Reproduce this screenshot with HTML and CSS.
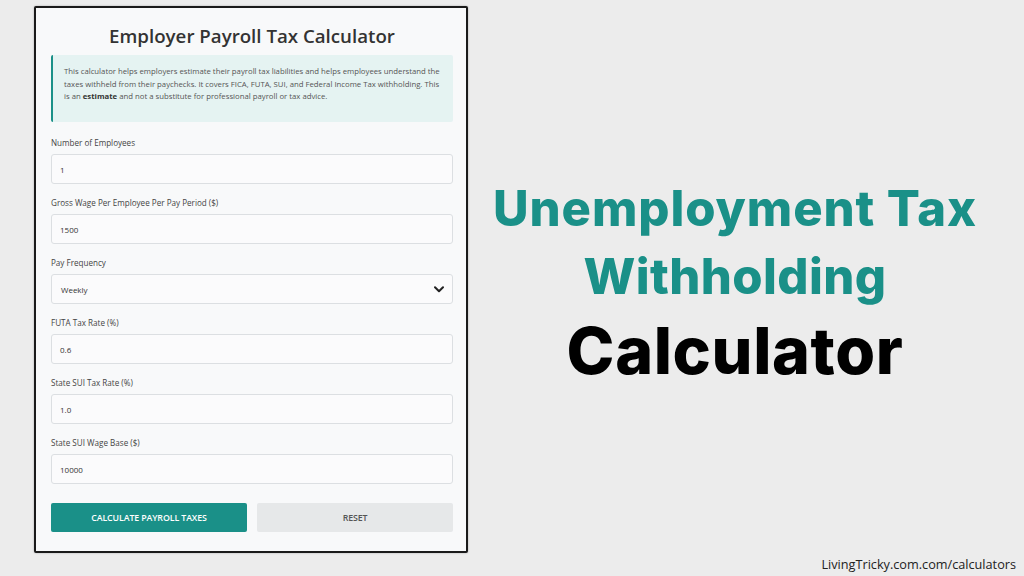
FILE: index.html
```html
<!DOCTYPE html>
<html>
<head>
<meta charset="utf-8">
<link rel="stylesheet" href="styles.css">
</head>
<body>
<div class="page">
  <div class="main">
    <div class="card">
      <h1 class="title">Employer Payroll Tax Calculator</h1>
      <div class="info">
        <p>This calculator helps employers estimate their payroll tax liabilities and helps employees understand the taxes withheld from their paychecks. It covers FICA, FUTA, SUI, and Federal Income Tax withholding. This is an <b>estimate</b> and not a substitute for professional payroll or tax advice.</p>
      </div>
      <div class="field">
        <label class="label">Number of Employees</label>
        <div class="input">1</div>
      </div>
      <div class="field">
        <label class="label">Gross Wage Per Employee Per Pay Period ($)</label>
        <div class="input">1500</div>
      </div>
      <div class="field">
        <label class="label">Pay Frequency</label>
        <div class="input select">
          <span>Weekly</span>
          <svg class="chev" width="10" height="7" viewBox="0 0 10 7"><path d="M1 1.2 L5 5.2 L9 1.2" fill="none" stroke="#222" stroke-width="2" stroke-linecap="round" stroke-linejoin="round"/></svg>
        </div>
      </div>
      <div class="field">
        <label class="label">FUTA Tax Rate (%)</label>
        <div class="input">0.6</div>
      </div>
      <div class="field">
        <label class="label">State SUI Tax Rate (%)</label>
        <div class="input">1.0</div>
      </div>
      <div class="field">
        <label class="label">State SUI Wage Base ($)</label>
        <div class="input">10000</div>
      </div>
      <div class="buttons">
        <div class="btn primary">CALCULATE PAYROLL TAXES</div>
        <div class="btn secondary">RESET</div>
      </div>
    </div>
    <div class="headline">
      <div class="teal">Unemployment Tax</div>
      <div class="teal">Withholding</div>
      <div class="black">Calculator</div>
    </div>
  </div>
  <div class="footer">LivingTricky.com.com/calculators</div>
</div>
</body>
</html>
```
FILE: styles.css
```css
* { box-sizing: border-box; }
html, body { margin: 0; padding: 0; }
body {
  width: 1024px;
  height: 576px;
  overflow: hidden;
  background: #ececec;
  font-family: "Open Sans", "Noto Sans", sans-serif;
}
.page {
  display: flex;
  flex-direction: column;
  height: 576px;
}
.main {
  display: flex;
  height: 556px;
}
.card {
  margin: 6px 0 0 34px;
  width: 434px;
  height: 547px;
  border: 2px solid #1a1a1a;
  border-radius: 2px;
  background: #f8f9fa;
  padding: 0 13px 0 15px;
  box-shadow: 0 0 2px rgba(0,0,0,0.3);
}
.title {
  margin: 14px 0 0 0;
  text-align: center;
  font-size: 18.7px;
  line-height: 28px;
  font-weight: 600;
  color: #333;
}
.info {
  margin-top: 5px;
  height: 67px;
  background: #e5f3f2;
  border-left: 2px solid #1a9088;
  padding: 10px 8px 0 11px;
  border-radius: 2px;
}
.info p {
  margin: 0;
  font-size: 7.75px;
  line-height: 12.6px;
  color: #555;
}
.info b { color: #333; font-weight: 700; }
.field {
  margin-top: 15px;
}
.field + .field { margin-top: 13px; }
.label {
  display: block;
  font-size: 8.1px;
  line-height: 12px;
  color: #444;
  margin-bottom: 5px;
}
.input {
  height: 30px;
  border: 1px solid #dcdfe2;
  border-radius: 3px;
  background: #fbfbfc;
  font-size: 8px;
  color: #333;
  padding: 0 8px;
  display: flex;
  align-items: center;
}
.select {
  justify-content: space-between;
  padding: 0 8px 0 9px;
}
.chev { display: block; }
.buttons {
  display: flex;
  gap: 10px;
  margin-top: 19px;
}
.btn {
  flex: 1;
  height: 29px;
  border-radius: 2px;
  display: flex;
  align-items: center;
  justify-content: center;
  font-size: 8.8px;
  font-weight: 600;
  letter-spacing: -0.1px;
}
.primary { background: #1a9088; color: #fff; }
.secondary { background: #e6e8e9; color: #555; }
.headline {
  flex: 1;
  display: flex;
  flex-direction: column;
  align-items: center;
  padding-top: 175px;
  padding-right: 22px;
  font-family: "Inter", "Lato", sans-serif;
  font-weight: 800;
}
.teal {
  color: #1a9088;
  font-size: 49px;
  line-height: 68px;
  letter-spacing: 0.9px;
}
.teal + .teal { letter-spacing: 0.4px; }
.black {
  color: #000;
  font-size: 64.5px;
  line-height: 80px;
  letter-spacing: 0.6px;
}
.footer {
  text-align: right;
  padding-right: 8px;
  font-size: 12.7px;
  line-height: 16px;
  color: #222;
}
```
